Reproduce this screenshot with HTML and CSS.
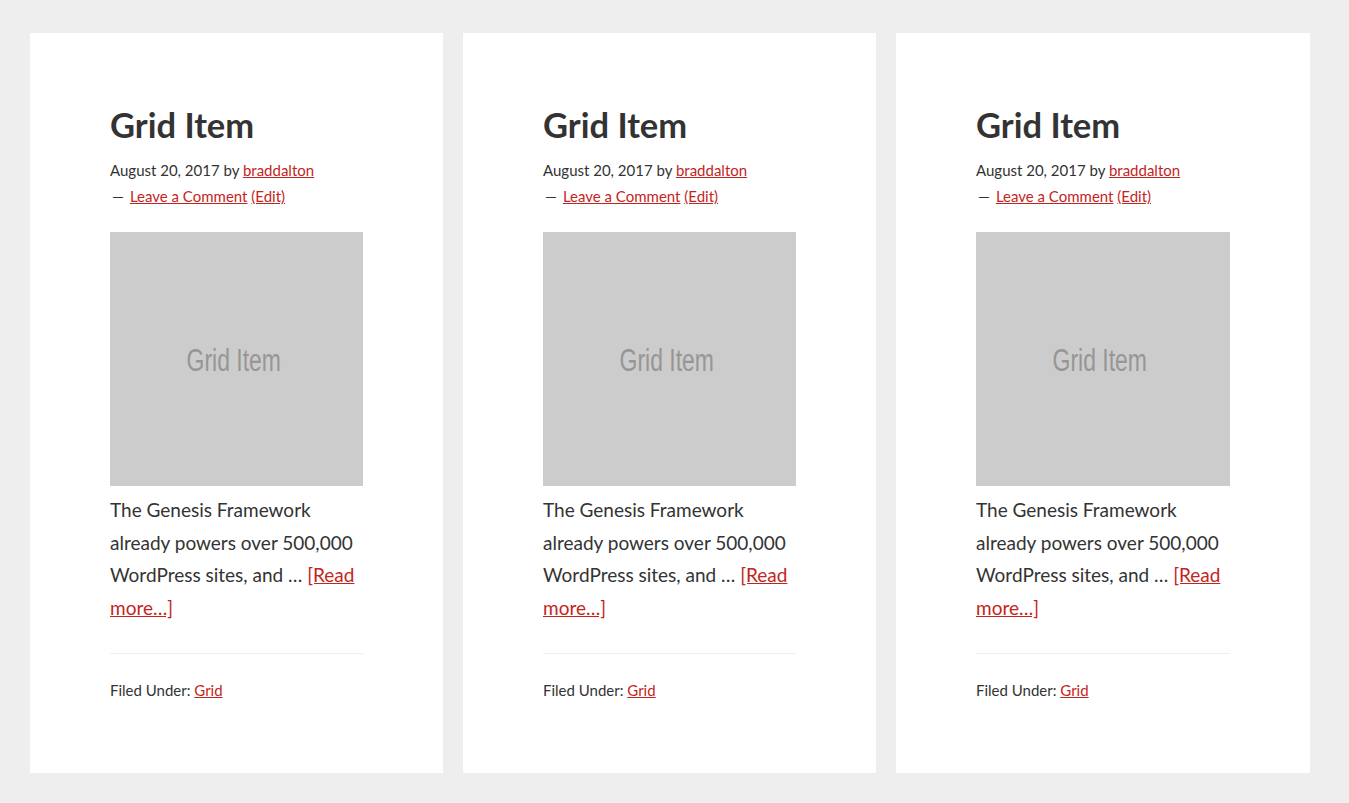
FILE: index.html
```html
<!DOCTYPE html>
<html lang="en">
<head>
<meta charset="utf-8">
<title>Grid</title>
<link rel="stylesheet" href="styles.css">
</head>
<body>
<main class="grid">
  <article class="entry">
    <h2 class="entry-title">Grid Item</h2>
    <p class="entry-meta">August 20, 2017 by <a href="#">braddalton</a><br><span class="dash">—</span><a href="#">Leave a Comment</a> <a href="#">(Edit)</a></p>
    <div class="thumb"><span class="thumb-label">Grid Item</span></div>
    <p class="excerpt">The Genesis Framework<br>already powers over 500,000<br>WordPress sites, and … <a href="#">[Read<br>more…]</a></p>
    <footer class="entry-footer">Filed Under: <a href="#">Grid</a></footer>
  </article>
  <article class="entry">
    <h2 class="entry-title">Grid Item</h2>
    <p class="entry-meta">August 20, 2017 by <a href="#">braddalton</a><br><span class="dash">—</span><a href="#">Leave a Comment</a> <a href="#">(Edit)</a></p>
    <div class="thumb"><span class="thumb-label">Grid Item</span></div>
    <p class="excerpt">The Genesis Framework<br>already powers over 500,000<br>WordPress sites, and … <a href="#">[Read<br>more…]</a></p>
    <footer class="entry-footer">Filed Under: <a href="#">Grid</a></footer>
  </article>
  <article class="entry">
    <h2 class="entry-title">Grid Item</h2>
    <p class="entry-meta">August 20, 2017 by <a href="#">braddalton</a><br><span class="dash">—</span><a href="#">Leave a Comment</a> <a href="#">(Edit)</a></p>
    <div class="thumb"><span class="thumb-label">Grid Item</span></div>
    <p class="excerpt">The Genesis Framework<br>already powers over 500,000<br>WordPress sites, and … <a href="#">[Read<br>more…]</a></p>
    <footer class="entry-footer">Filed Under: <a href="#">Grid</a></footer>
  </article>
</main>
</body>
</html>
```
FILE: styles.css
```css
html, body {
  margin: 0;
  padding: 0;
}
body {
  background: #eeeeee;
  color: #333333;
  font-family: "Lato", "Liberation Sans", sans-serif;
  font-size: 17px;
  line-height: 1.625;
}
a {
  color: #c3251d;
  text-decoration: underline;
}
.grid {
  display: grid;
  grid-template-columns: 413px 413px 414px;
  gap: 20px;
  margin: 33px 0 0 30px;
}
.entry {
  background: #fff;
  height: 740px;
  box-sizing: border-box;
  padding: 70px 80px 0;
}
.entry-title {
  margin: 0 0 11px;
  font-size: 34.5px;
  line-height: 43px;
  font-weight: 700;
  color: #333;
}
.entry-meta {
  margin: 0 0 23px;
  font-size: 15px;
  line-height: 26px;
}
.dash {
  margin: 0 6px 0 2px;
}
.thumb {
  width: 253px;
  height: 254px;
  background: #cccccc;
  display: flex;
  align-items: center;
  justify-content: center;
}
.entry:last-child .thumb {
  width: 254px;
}
.thumb-label {
  font-family: "Liberation Sans", Arial, sans-serif;
  font-size: 31px;
  color: #969696;
  transform: scaleX(0.74);
  white-space: nowrap;
  margin: 4px 6px 0 0;
}
.excerpt {
  margin: 8px 0 0;
  font-size: 19px;
  line-height: 32.5px;
  white-space: nowrap;
}
.entry-footer {
  margin-top: 29px;
  border-top: 1px solid #eeeeee;
  padding-top: 23px;
  font-size: 15px;
  line-height: 26px;
}
```
